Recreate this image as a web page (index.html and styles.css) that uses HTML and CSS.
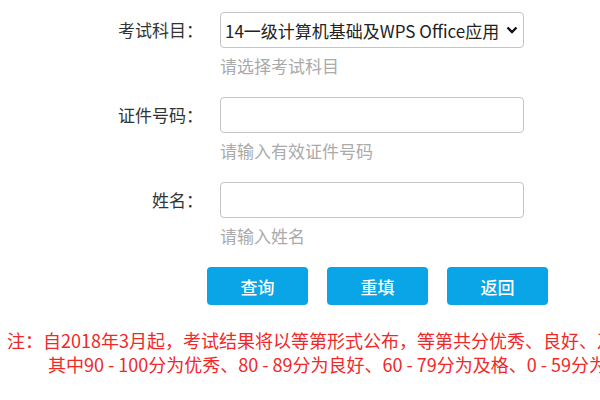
FILE: index.html
```html
<!DOCTYPE html>
<html>
	<head>
		<meta charset="utf-8">
		<title>成绩查询</title>
		<link rel="stylesheet" href="styles.css">
	</head>
	<body>
		<section class="query">
			<div class="row">
				<label class="label" for="subject">考试科目：</label>
				<div class="field">
					<select id="subject" class="control select">
						<option>14一级计算机基础及WPS Office应用</option>
					</select>
					<p class="hint">请选择考试科目</p>
				</div>
			</div>
			<div class="row">
				<label class="label" for="idno">证件号码：</label>
				<div class="field">
					<input id="idno" class="control" type="text">
					<p class="hint">请输入有效证件号码</p>
				</div>
			</div>
			<div class="row">
				<label class="label" for="name">姓名：</label>
				<div class="field">
					<input id="name" class="control" type="text">
					<p class="hint">请输入姓名</p>
				</div>
			</div>
			<div class="actions">
				<button>查询</button>
				<button>重填</button>
				<button>返回</button>
			</div>
			<div class="note">
				<p>注：自2018年3月起，考试结果将以等第形式公布，等第共分优秀、良好、及格、不及格四个等级，</p>
				<p class="second">其中90 - 100分为优秀、80 - 89分为良好、60 - 79分为及格、0 - 59分为不及格。</p>
			</div>
		</section>
	</body>
</html>
```

FILE: styles.css
```css
* {
	box-sizing: border-box;
	margin: 0;
	padding: 0;
}
body {
	width: 600px;
	height: 400px;
	overflow: hidden;
	background: #fff;
	font-family: "Noto Sans CJK SC", sans-serif;
	font-size: 17px;
	color: #333;
}
.query {
	padding-top: 12px;
}
.row {
	display: grid;
	grid-template-columns: 203px 304px;
	column-gap: 17px;
	margin-bottom: 19px;
}
.label {
	height: 36px;
	line-height: 36px;
	text-align: right;
}
.control {
	display: block;
	width: 304px;
	height: 36px;
	padding: 0 4px;
	border: 1px solid #c4c4c4;
	border-radius: 4px;
	background: #fff;
	font-family: inherit;
	font-size: 17px;
	color: #222;
	outline: none;
}
.select {
	appearance: none;
	padding-right: 24px;
	background-image: url("data:image/svg+xml,%3Csvg xmlns='http://www.w3.org/2000/svg' width='12' height='8' viewBox='0 0 12 8'%3E%3Cpath d='M1.5 1.5 6 6l4.5-4.5' fill='none' stroke='%23111' stroke-width='2.4'/%3E%3C/svg%3E");
	background-repeat: no-repeat;
	background-position: right 5px center;
}
.hint {
	margin-top: 6px;
	line-height: 24px;
	color: #aaa;
}
.actions {
	display: flex;
	gap: 19px;
	margin-left: 207px;
}
.actions > button {
	width: 101px;
	height: 38px;
	border: none;
	border-radius: 4px;
	background-color: #0aa5e6;
	color: #fff;
	font-family: inherit;
	font-size: 17px;
	font-weight: 500;
}
.note {
	margin-top: 23px;
	padding-left: 7px;
	font-size: 18px;
	line-height: 24px;
	color: #f02828;
	white-space: nowrap;
}
.note .second {
	padding-left: 41px;
}
```
